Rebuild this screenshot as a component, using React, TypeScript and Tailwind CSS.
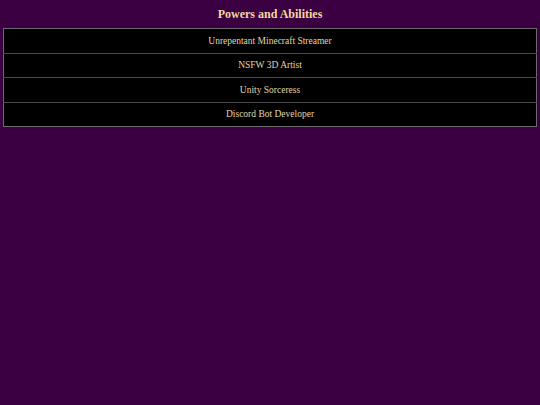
const powers = [
  "Unrepentant Minecraft Streamer",
  "NSFW 3D Artist",
  "Unity Sorceress",
  "Discord Bot Developer",
];

export default function App() {
  return (
    <div className="min-h-screen bg-[#3b0042] px-[3px] pt-[7px] font-['Georgia','Liberation_Serif',serif]">
      <h2 className="text-center text-[12px] font-bold leading-[15px] text-[#f3d8a0]">
        Powers and Abilities
      </h2>
      <table className="mt-[6px] w-full border-collapse border border-[#6b6b6b] bg-black">
        <tbody>
          {powers.map((p) => (
            <tr key={p} className="border-b border-[#4a4a4a] last:border-b-0">
              <td className="h-[24.5px] text-center text-[9.5px] text-[#e0d6a8]">{p}</td>
            </tr>
          ))}
        </tbody>
      </table>
    </div>
  );
}
